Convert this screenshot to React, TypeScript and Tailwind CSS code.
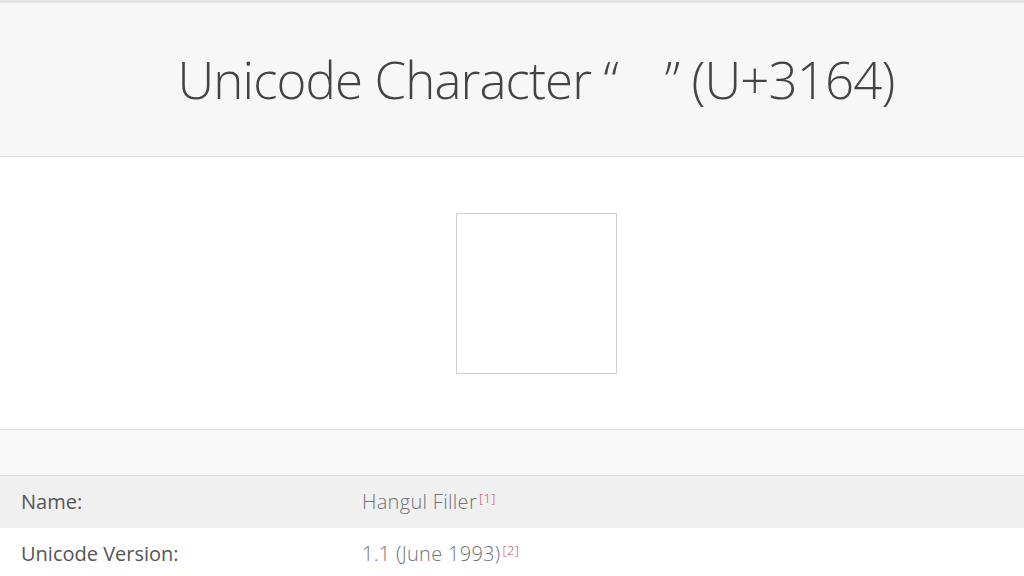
const rows = [
  { label: "Name:", value: "Hangul Filler", ref: "[1]", shade: true },
  { label: "Unicode Version:", value: "1.1 (June 1993)", ref: "[2]", shade: false },
];

const App = () => {
  return (
    <div
      className="min-h-screen bg-white text-[#555]"
      style={{ fontFamily: '"Open Sans", "Noto Sans", sans-serif' }}
    >
      {/* title band */}
      <div className="border-t-[3px] border-[#e4e4e4] bg-[#f7f7f7] border-b border-b-[#dcdcdc]">
        <h1 className="h-[153px] pl-[48px] flex items-center justify-center text-[51px] font-light tracking-[-0.9px] text-[#444]">
          Unicode Character “
          <span style={{ fontFamily: '"Noto Sans CJK KR", sans-serif' }}>{"\u3164"}</span>
          ” (U+3164)
        </h1>
      </div>

      {/* glyph preview */}
      <div className="h-[273px] pl-[48px] flex items-center justify-center border-b border-[#dcdcdc]">
        <div className="w-[161px] h-[161px] border border-[#cfcfcf] bg-white" />
      </div>

      <div className="h-[46px] bg-[#f8f8f8] border-b border-[#dcdcdc]" />

      {/* property table */}
      <div className="text-[20px]">
        {rows.map((r) => (
          <div
            key={r.label}
            className={`flex h-[52px] items-center ${r.shade ? "bg-[#f0f0f0]" : "bg-white"}`}
          >
            <div className="w-[362px] pl-[21px] text-[#555]">{r.label}</div>
            <div className="text-[#727272] font-light tracking-[0.3px]">
              {r.value}
              <sup className="text-[13px] text-[#c9474a] ml-[2px] font-light">{r.ref}</sup>
            </div>
          </div>
        ))}
      </div>
    </div>
  );
};

export default App;
